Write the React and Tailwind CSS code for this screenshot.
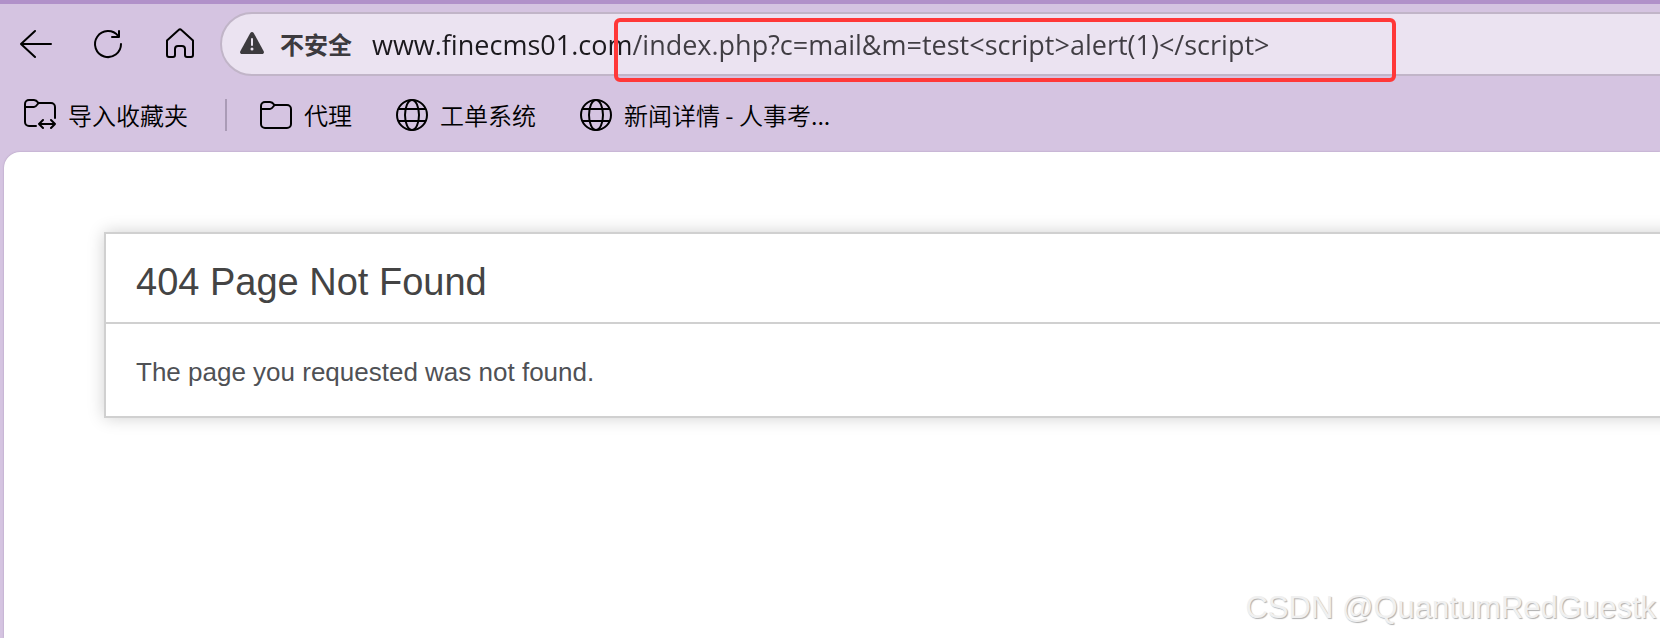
const bookmarks = [
  { label: '代理', icon: FolderIcon },
  { label: '工单系统', icon: GlobeIcon },
  { label: '新闻详情 - 人事考...', icon: GlobeIcon },
]

const stroke = {
  viewBox: '0 0 32 32',
  fill: 'none',
  stroke: 'currentColor',
  strokeWidth: 2,
  strokeLinecap: 'round',
  strokeLinejoin: 'round',
  'aria-hidden': true,
}

function BackIcon() {
  return (
    <svg {...stroke} className="w-8 h-8 shrink-0">
      <path d="M15 3 1 16l14 13M1 16h30" />
    </svg>
  )
}

function ReloadIcon() {
  return (
    <svg {...stroke} className="w-8 h-8 shrink-0">
      <path d="M26.2 8A13 13 0 1 0 29 16" />
      <path d="M27 3v6h-7" />
    </svg>
  )
}

function HomeIcon() {
  return (
    <svg {...stroke} className="w-8 h-8 shrink-0">
      <path d="M3 12.5 14.6 2a2 2 0 0 1 2.8 0L29 12.5V27a2 2 0 0 1-2 2h-4a2 2 0 0 1-2-2v-6a3 3 0 0 0-3-3h-4a3 3 0 0 0-3 3v6a2 2 0 0 1-2 2H5a2 2 0 0 1-2-2z" />
    </svg>
  )
}

function WarningIcon() {
  return (
    <svg viewBox="0 0 24 24" className="w-6 h-6 shrink-0" aria-hidden="true">
      <path d="M10.3 1c.8-1.3 2.6-1.3 3.4 0l10 18.3c.7 1.3-.2 2.7-1.7 2.7H2c-1.5 0-2.4-1.4-1.7-2.7z" fill="#3c3a3e" />
      <path d="M12 7v6" stroke="#ebe3f1" strokeWidth="2" strokeLinecap="round" />
      <circle cx="12" cy="17" r="1.5" fill="#ebe3f1" />
    </svg>
  )
}

function FolderIcon() {
  return (
    <svg {...stroke} className="w-8 h-8 shrink-0">
      <path d="M1 25V7a4 4 0 0 1 4-4h5c2 0 3 1 4.5 3H27a4 4 0 0 1 4 4v15a4 4 0 0 1-4 4H5a4 4 0 0 1-4-4z" />
      <path d="M1 10h9c2 0 3-2 4.5-4" />
    </svg>
  )
}

function ImportFolderIcon() {
  return (
    <svg {...stroke} className="w-8 h-8 shrink-0">
      <path d="M12 27H5a4 4 0 0 1-4-4V5a4 4 0 0 1 4-4h5c2 0 3 1 4.5 3H27a4 4 0 0 1 4 4v11" />
      <path d="M1 8h9c2 0 3-2 4.5-4" />
      <path d="M15 25h16M19 21l-4 4 4 4M27 21l4 4-4 4" />
    </svg>
  )
}

function GlobeIcon() {
  return (
    <svg {...stroke} className="w-8 h-8 shrink-0">
      <circle cx="16" cy="16" r="15" />
      <ellipse cx="16" cy="16" rx="7" ry="15" />
      <path d="M3 10h26M3 22h26" />
    </svg>
  )
}

function Toolbar() {
  return (
    <div className="flex items-center pl-5 pt-2">
      <div className="flex items-center gap-10">
        <button type="button" aria-label="Back">
          <BackIcon />
        </button>
        <button type="button" aria-label="Reload">
          <ReloadIcon />
        </button>
        <button type="button" aria-label="Home">
          <HomeIcon />
        </button>
      </div>
      <div className="relative flex flex-1 items-center h-16 ml-6 -mr-10 pl-[18px] rounded-full border-2 border-[#c1b5c8] bg-[#ebe3f1]">
        <WarningIcon />
        <label htmlFor="address" className="ml-4 shrink-0 text-2xl font-bold text-[#3c3a3e]">
          不安全
        </label>
        {/* host is darker than the path after it */}
        <input
          id="address"
          type="text"
          defaultValue="www.finecms01.com/index.php?c=mail&m=test<script>alert(1)</script>"
          className="flex-1 min-w-0 ml-5 h-12 text-[27px] font-['Open_Sans','Noto_Sans_CJK_SC',sans-serif] text-transparent bg-clip-text bg-linear-to-r from-[#1b191d] from-[258px] to-[#403d43] to-[258px] outline-none"
        />
        <div className="absolute left-[392px] top-1 w-[782px] h-16 rounded-md border-4 border-[#ff3838] pointer-events-none" />
      </div>
    </div>
  )
}

function BookmarksBar() {
  return (
    <nav className="flex items-center h-[76px] pl-6 pt-px text-2xl font-[350] text-black whitespace-nowrap">
      <a href="#import" className="flex items-center gap-3">
        <ImportFolderIcon />
        导入收藏夹
      </a>
      <span className="w-0.5 h-8 ml-[37px] mr-[33px] bg-[#aa9bb6]" />
      <div className="flex items-center gap-11">
        {bookmarks.map(({ label, icon: Icon }) => (
          <a key={label} href="#bookmark" className="flex items-center gap-3">
            <Icon />
            {label}
          </a>
        ))}
      </div>
    </nav>
  )
}

export default function App() {
  return (
    <div className="min-h-screen flex flex-col overflow-hidden bg-[#d5c4e1] border-t-4 border-[#b191c9] font-['Noto_Sans_CJK_SC',sans-serif]">
      <header>
        <Toolbar />
        <BookmarksBar />
      </header>
      <main className="relative flex-1 ml-1 pt-20 pl-[100px] rounded-tl-2xl bg-white shadow-[0_0_2px_#a995b8] font-['Liberation_Sans',sans-serif]">
        <section className="-mr-6 border-2 border-[#d0d0d0] shadow-[0_0_16px_#d0d0d0]">
          <h1 className="px-[30px] pt-7 pb-5 border-b-2 border-[#d0d0d0] text-[38px] leading-10 text-[#444444]">
            404 Page Not Found
          </h1>
          <p className="px-[30px] pt-[34px] pb-[30px] text-[26px] leading-7 text-[#4f5155]">
            The page you requested was not found.
          </p>
        </section>
        <span className="absolute right-1 bottom-2.5 text-[31px] leading-10 text-[#f0f0f0] [text-shadow:1px_1px_1px_#b0b0b0]">
          CSDN @QuantumRedGuestk
        </span>
      </main>
    </div>
  )
}
